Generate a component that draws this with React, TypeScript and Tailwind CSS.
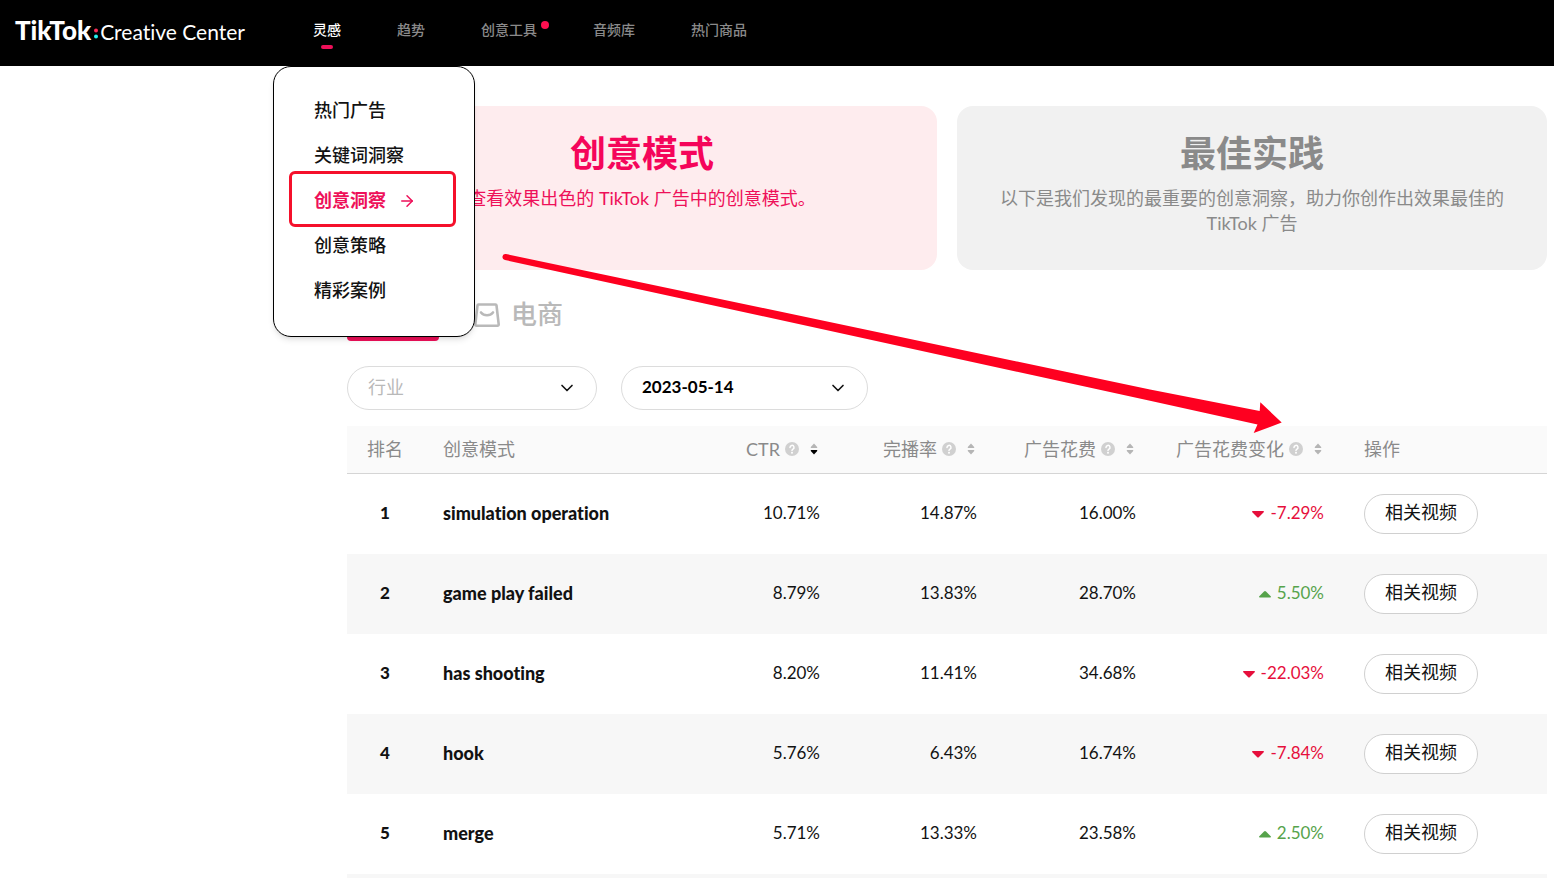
import { ArrowRight, ChevronDown } from "lucide-react"
import clsx from "clsx"

const NAV_ITEMS = ["灵感", "趋势", "创意工具", "音频库", "热门商品"]

const MENU_ITEMS = ["热门广告", "关键词洞察", "创意洞察", "创意策略", "精彩案例"]

const COLUMNS = [
    { label: "CTR", width: "w-40", sorted: true },
    { label: "完播率", width: "w-[157px]", sorted: false },
    { label: "广告花费", width: "w-[159px]", sorted: false },
    { label: "广告花费变化", width: "w-[188px]", sorted: false },
]

const ROWS = [
    { name: "simulation operation", ctr: "10.71%", finish: "14.87%", spend: "16.00%", change: "-7.29%" },
    { name: "game play failed", ctr: "8.79%", finish: "13.83%", spend: "28.70%", change: "5.50%" },
    { name: "has shooting", ctr: "8.20%", finish: "11.41%", spend: "34.68%", change: "-22.03%" },
    { name: "hook", ctr: "5.76%", finish: "6.43%", spend: "16.74%", change: "-7.84%" },
    { name: "merge", ctr: "5.71%", finish: "13.33%", spend: "23.58%", change: "2.50%" },
]

function Logo() {
    return (
        <a href="#" className="flex w-[298px] shrink-0 items-baseline pb-1 text-white">
            <span className="text-[26px] leading-8 font-black">TikTok</span>
            <svg width="9" height="14" viewBox="0 0 9 14" aria-hidden="true">
                <circle cx="5" cy="4.5" r="2" fill="#fe2c55" />
                <circle cx="5" cy="10.5" r="2" fill="#25f4ee" />
            </svg>
            <span className="text-[21px] leading-8">Creative Center</span>
        </a>
    )
}

function InspirationMenu() {
    return (
        <ul className="absolute top-[66px] -left-10 z-20 w-[202px] rounded-[18px] border border-black bg-white pt-5 pb-6 text-lg font-medium text-[#121212] shadow-md">
            {MENU_ITEMS.map((item) => {
                const current = item === "创意洞察"
                return (
                    <li key={item} className="relative">
                        <a
                            href="#"
                            className={clsx("flex h-[45px] items-center gap-3 pl-10", current && "font-bold text-[#ee1059]")}
                        >
                            {item}
                            {current && <ArrowRight size={18} strokeWidth={2} className="mt-0.5" />}
                        </a>
                        {current && (
                            <span className="pointer-events-none absolute -top-1.5 left-[15px] h-14 w-[167px] rounded-md border-3 border-[#f5102b]" />
                        )}
                    </li>
                )
            })}
        </ul>
    )
}

function Header() {
    return (
        <header className="flex h-[66px] items-center bg-black pl-[15px]">
            <Logo />
            <nav className="h-full">
                <ul className="flex h-full gap-14 text-sm">
                    {NAV_ITEMS.map((item, i) => (
                        <li key={item} className="relative h-full">
                            <a
                                href="#"
                                className={clsx(
                                    "flex h-full flex-col items-center pt-5 font-medium",
                                    i === 0 ? "text-white" : "text-[#8a8a8a]",
                                )}
                            >
                                {item}
                                {i === 0 && <span className="mt-[5px] h-1 w-3 rounded-full bg-[#ee1059]" />}
                            </a>
                            {item === "创意工具" && (
                                <span className="absolute top-[21px] -right-3 size-2 rounded-full bg-[#fe0f50]" />
                            )}
                            {i === 0 && <InspirationMenu />}
                        </li>
                    ))}
                </ul>
            </nav>
        </header>
    )
}

function BagIcon() {
    return (
        <svg width="28" height="28" viewBox="0 0 28 28" fill="none" stroke="currentColor" strokeWidth="2.6" strokeLinejoin="round" strokeLinecap="round" aria-hidden="true">
            <path d="M5.5 3.5h17a1 1 0 0 1 1 .9l2.2 19a1.2 1.2 0 0 1-1.2 1.3h-21a1.2 1.2 0 0 1-1.2-1.3l2.2-19a1 1 0 0 1 1-.9Z" />
            <path d="M8 11.5c3 3.6 9 3.6 12 0" />
        </svg>
    )
}

function HelpIcon() {
    return (
        <svg width="14" height="14" viewBox="0 0 14 14" fill="none" aria-hidden="true">
            <circle cx="7" cy="7" r="7" fill="#d0d0d0" />
            <path d="M5 5.4a2 2 0 1 1 3 1.7c-.7.4-1 .7-1 1.3" stroke="#fff" strokeWidth="1.5" strokeLinecap="round" />
            <circle cx="7" cy="10.7" r="1" fill="#fff" />
        </svg>
    )
}

function SortIcon({ sorted }: { sorted: boolean }) {
    return (
        <svg width="8" height="12" viewBox="0 0 8 12" aria-hidden="true">
            <path d="M4 .4 7.2 4v1H.8V4Z" fill="#b5b5b5" />
            <path d="M4 11.6 7.2 8V7H.8v1Z" fill={sorted ? "#000" : "#b5b5b5"} />
        </svg>
    )
}

function Select({ id, label, value, className }: { id: string; label: string; value: string; className: string }) {
    return (
        <div className={clsx("relative", className)}>
            <select
                id={id}
                aria-label={label}
                className="h-11 w-full appearance-none rounded-full border border-[#dcdcdc] bg-white px-5 pb-0.5 leading-6"
            >
                <option>{value}</option>
            </select>
            <ChevronDown size={20} strokeWidth={2} className="pointer-events-none absolute top-3 right-5 text-[#121212]" />
        </div>
    )
}

function Change({ value }: { value: string }) {
    const down = value.startsWith("-")
    return (
        <span className={clsx("flex items-center justify-end gap-1.5", down ? "text-[#e60f3c]" : "text-[#56a34b]")}>
            <svg width="12" height="8" viewBox="0 0 12 8" fill="currentColor" className="mt-0.5" aria-hidden="true">
                {down ? (
                    <path d="M.8 1h10.4c.8 0 1 .8.5 1.3L7 7.1a1.4 1.4 0 0 1-2 0L.3 2.3C-.2 1.8 0 1 .8 1Z" />
                ) : (
                    <path d="M.8 7.5h10.4c.8 0 1-.8.5-1.3L7 1.4a1.4 1.4 0 0 0-2 0L.3 6.2c-.5.5-.3 1.3.5 1.3Z" />
                )}
            </svg>
            {value}
        </span>
    )
}

function PatternTable() {
    return (
        <table className="mt-4 w-full table-fixed border-separate border-spacing-0">
            <thead className="bg-[#fafafa] text-left text-lg text-[#8a8a8a]">
                <tr className="h-12 *:border-b *:border-[#d5d5d5] *:pb-0.5 *:font-normal">
                    <th className="w-[76px] pl-5">排名</th>
                    <th className="pl-5">创意模式</th>
                    {COLUMNS.map((col) => (
                        <th key={col.label} className={clsx("pr-5", col.width)}>
                            <button type="button" className="flex w-full items-center justify-end whitespace-nowrap">
                                {col.label}
                                <span className="mr-[11px] ml-[5px]">
                                    <HelpIcon />
                                </span>
                                <span className="mr-0.5">
                                    <SortIcon sorted={col.sorted} />
                                </span>
                            </button>
                        </th>
                    ))}
                    <th className="w-[203px] pl-5">操作</th>
                </tr>
            </thead>
            <tbody className="text-[17px] text-[#121212]">
                {ROWS.map((row, i) => (
                    <tr key={row.name} className="h-20 *:pb-0.5 even:bg-[#f7f7f7]">
                        <td className="text-center font-black">{i + 1}</td>
                        <td className="pl-5 text-lg font-black">{row.name}</td>
                        <td className="pr-5 text-right">{row.ctr}</td>
                        <td className="pr-5 text-right">{row.finish}</td>
                        <td className="pr-5 text-right">{row.spend}</td>
                        <td className="pr-5 text-right">
                            <Change value={row.change} />
                        </td>
                        <td className="pt-0.5 pl-5">
                            <button
                                type="button"
                                className="h-10 rounded-full border border-[#d0d0d0] bg-white px-5 pb-1 text-lg leading-6"
                            >
                                相关视频
                            </button>
                        </td>
                    </tr>
                ))}
                <tr className="h-1 even:bg-[#f7f7f7]">
                    <td colSpan={7} />
                </tr>
            </tbody>
        </table>
    )
}

export default function App() {
    return (
        <div className="relative bg-white font-[Lato,'Noto_Sans_CJK_SC',sans-serif] [font-variant-ligatures:none]">
            <Header />

            <main className="pt-10 pr-[7px] pl-[347px]">
                <div className="grid grid-cols-2 gap-5 text-center">
                    <section className="min-h-[164px] rounded-2xl bg-[#feecee] px-10 pt-5 text-[#ee1059]">
                        <h2 className="text-4xl leading-[54px] font-bold text-[#f5055a]">创意模式</h2>
                        <p className="mt-1.5 text-lg leading-[25px]">
                            查看效果出色的 TikTok 广告中的创意模式。
                        </p>
                    </section>
                    <section className="min-h-[164px] rounded-2xl bg-[#f1f1f1] px-10 pt-5 text-[#8a8a8a]">
                        <h2 className="text-4xl leading-[54px] font-bold">最佳实践</h2>
                        <p className="mt-1.5 text-lg leading-[25px]">
                            以下是我们发现的最重要的创意洞察，助力你创作出效果最佳的 TikTok 广告
                        </p>
                    </section>
                </div>

                <div role="tablist" className="mt-5 flex h-[51px] gap-[34px]">
                    <button
                        type="button"
                        role="tab"
                        aria-label="应用"
                        aria-selected="true"
                        className="w-[92px] rounded-b-sm border-b-4 border-[#ee1059]"
                    />
                    <button
                        type="button"
                        role="tab"
                        className="flex items-center gap-2.5 pb-0.5 text-[26px] font-medium text-[#b9b9b9]"
                    >
                        <BagIcon />
                        电商
                    </button>
                </div>

                <div className="mt-[25px] flex gap-6">
                    <Select id="industry" label="行业" value="行业" className="w-[250px] text-lg text-[#b9b9b9]" />
                    <Select id="date" label="日期" value="2023-05-14" className="w-[247px] text-[17px] font-bold text-black" />
                </div>

                <PatternTable />
            </main>

            {/* Callout from the menu entry to the spend change column */}
            <svg
                className="pointer-events-none absolute top-[250px] left-[500px] z-30"
                width="790"
                height="190"
                viewBox="500 250 790 190"
                fill="#fe0020"
                aria-hidden="true"
            >
                <path d="M506 254 1150 389.5 1259.7 411 1260.3 402.3 1281.7 422.5 1253.7 433 1257.5 424.5 1150 400.7 505 260a3 3 0 0 1 1-6Z" />
            </svg>
        </div>
    )
}
